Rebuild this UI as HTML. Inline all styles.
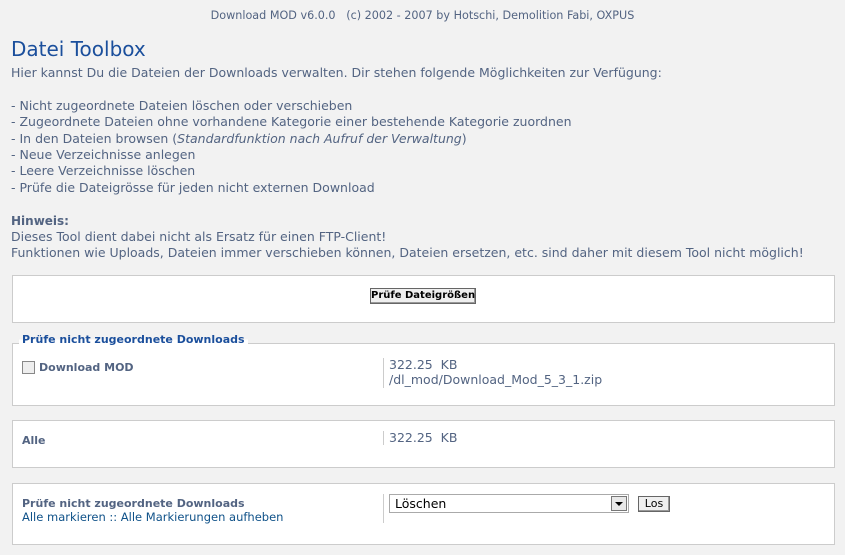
<!DOCTYPE html>
<html><head><meta charset="utf-8"><style>
body{margin:0;width:845px;height:555px;background:#f2f2f2;font-family:"DejaVu Sans","Liberation Sans",sans-serif;font-size:12.5px;color:#536482;position:relative;overflow:hidden}
.a{position:absolute;white-space:nowrap}
.box{position:absolute;left:12px;width:821px;background:#fff;border:1px solid #ccc}
.sep{position:absolute;left:383px;width:1px;background:#ccc}
.btn{position:absolute;background:#efefef;border:1px solid #666;font-size:10px;font-weight:bold;color:#000;text-align:center;line-height:14px;white-space:nowrap;box-shadow:inset -1px -1px 0 #999}
b,.bd{font-weight:bold;font-size:11px}
</style></head><body>
<div class="a" style="left:0;width:845px;text-align:center;top:9px;font-size:11.2px">Download MOD v6.0.0 &nbsp; (c) 2002 - 2007 by Hotschi, Demolition Fabi, OXPUS</div>
<div class="a" style="left:11px;top:37px;font-size:20px;color:#1b4f9c">Datei Toolbox</div>
<div class="a" style="left:11px;top:65px;line-height:16.4px">Hier kannst Du die Dateien der Downloads verwalten. Dir stehen folgende Möglichkeiten zur Verfügung:<br><br>- Nicht zugeordnete Dateien löschen oder verschieben<br>- Zugeordnete Dateien ohne vorhandene Kategorie einer bestehende Kategorie zuordnen<br>- In den Dateien browsen (<i>Standardfunktion nach Aufruf der Verwaltung</i>)<br>- Neue Verzeichnisse anlegen<br>- Leere Verzeichnisse löschen<br>- Prüfe die Dateigrösse für jeden nicht externen Download<br><br><b style="font-size:12px">Hinweis:</b><br>Dieses Tool dient dabei nicht als Ersatz für einen FTP-Client!<br>Funktionen wie Uploads, Dateien immer verschieben können, Dateien ersetzen, etc. sind daher mit diesem Tool nicht möglich!</div>

<div class="box" style="top:275px;height:46px"></div>
<div class="btn" style="left:370px;top:288px;width:104px;height:14px">Prüfe Dateigrößen</div>

<div class="box" style="top:343px;height:61px"></div>
<div class="a bd" style="left:19px;top:333px;padding:0 3px;color:#1b4f9c;background:linear-gradient(#f2f2f2 50%,#fff 50%)">Prüfe nicht zugeordnete Downloads</div>
<div class="a" style="left:22px;top:361px;width:11px;height:11px;border:1px solid #888;background:#eee"></div>
<div class="a bd" style="left:39px;top:361px">Download MOD</div>
<div class="sep" style="top:358px;height:30px"></div>
<div class="a" style="left:389px;top:357px;line-height:15px">322.25 &nbsp;KB<br>/dl_mod/Download_Mod_5_3_1.zip</div>

<div class="box" style="top:420px;height:46px"></div>
<div class="a bd" style="left:22px;top:434px">Alle</div>
<div class="sep" style="top:431px;height:14px"></div>
<div class="a" style="left:389px;top:430px">322.25 &nbsp;KB</div>

<div class="box" style="top:483px;height:60px"></div>
<div class="a bd" style="left:22px;top:496px;line-height:15px">Prüfe nicht zugeordnete Downloads</div>
<div class="a" style="left:22px;top:510px;font-size:11.5px;color:#105289">Alle markieren :: Alle Markierungen aufheben</div>
<div class="sep" style="top:494px;height:29px"></div>
<div class="a" style="left:389px;top:494px;width:238px;height:17px;border:1px solid #aaa;background:#fff;color:#000;line-height:17px;text-indent:5px">Löschen</div>
<div class="a" style="left:611px;top:496px;width:14px;height:13px;border:1px solid #777;background:#e8e8e8"><div style="position:absolute;left:3px;top:5px;border-left:4px solid transparent;border-right:4px solid transparent;border-top:4px solid #000"></div></div>
<div class="btn" style="left:638px;top:496px;width:30px;height:14px;font-weight:normal;font-size:11px">Los</div>
</body></html>
